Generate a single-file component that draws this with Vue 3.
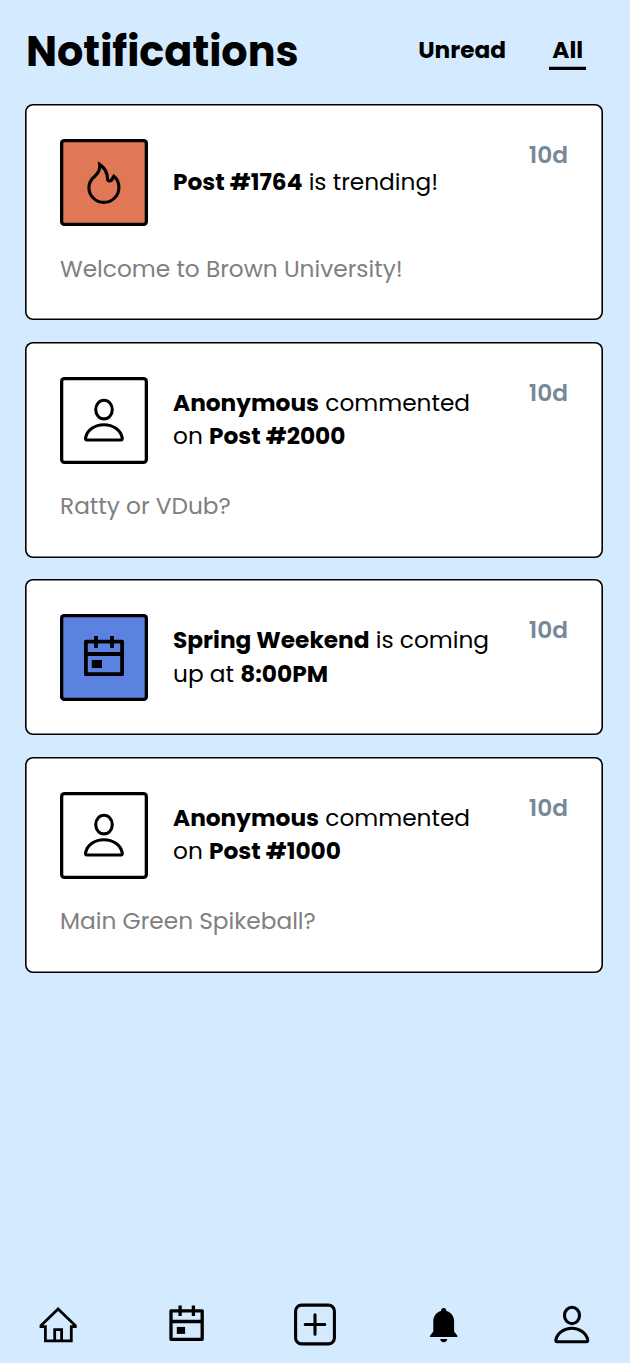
<script setup>
const items = [
  { id: 1, kind: 'flame', lines: [[{ t: 'Post #1764', b: true }, { t: ' is trending!' }]], body: 'Welcome to Brown University!' },
  { id: 2, kind: 'person', lines: [[{ t: 'Anonymous', b: true }, { t: ' commented' }], [{ t: 'on ' }, { t: 'Post #2000', b: true }]], body: 'Ratty or VDub?' },
  { id: 3, kind: 'calendar', lines: [[{ t: 'Spring Weekend', b: true }, { t: ' is coming' }], [{ t: 'up at ' }, { t: '8:00PM', b: true }]], body: '' },
  { id: 4, kind: 'person', lines: [[{ t: 'Anonymous', b: true }, { t: ' commented' }], [{ t: 'on ' }, { t: 'Post #1000', b: true }]], body: 'Main Green Spikeball?' },
]
</script>

<template>
  <div class="screen">
    <header class="header">
      <h1 class="title">Notifications</h1>
      <nav class="tabs">
        <span class="tab">Unread</span>
        <span class="tab active">All</span>
      </nav>
    </header>

    <main class="list">
      <article v-for="item in items" :key="item.id" class="card">
        <div class="row">
          <div class="tile" :class="item.kind">
            <svg v-if="item.kind === 'flame'" viewBox="0 0 44 44">
              <path d="M17.6 3.4C22 6.3 25.3 11.4 25.5 17.6C25.7 20.7 29.4 20.6 30.6 17.4C31 16.4 31.4 15.8 31.8 15.2C35 17.8 36.9 21.9 36.9 26.4A15 15 0 0 1 6.9 26.4C6.9 21.2 9.4 18 13.3 14.7C16.9 11.6 18.2 8.4 17.6 3.4Z" />
            </svg>
            <svg v-else-if="item.kind === 'person'" viewBox="0 0 44 44">
              <ellipse cx="22" cy="11.6" rx="8.3" ry="9.3" />
              <path d="M5 42H38.8Q40.7 42 40.2 39.6C38.6 31.8 31 26.7 21.9 26.7S5.2 31.8 3.6 39.6Q3.1 42 5 42Z" />
            </svg>
            <svg v-else class="cal" viewBox="0 0 44 44">
              <path d="M3.9 5.6H40.1V38.2H3.9ZM4 18H40M14 0V12M30 0V12" />
              <path class="solid" d="M9.8 24H20V32H9.8Z" />
            </svg>
          </div>
          <p class="message">
            <span v-for="(line, i) in item.lines" :key="i" class="line"><span v-for="(part, j) in line" :key="j" :class="{ strong: part.b }">{{ part.t }}</span></span>
          </p>
          <span class="age">10d</span>
        </div>
        <p v-if="item.body" class="body">{{ item.body }}</p>
      </article>
    </main>

    <footer class="bar">
      <svg viewBox="0 0 44 44">
        <path class="home" d="M22.1 7L39.3 23.6V24.7H35.3V38.9H9.4V24.7H5V23.6ZM18.7 38.8V27.7H25.6V38.8" />
      </svg>
      <svg viewBox="0 0 44 44">
        <path class="thick" d="M6 8.8H37.2V37.3H6ZM6.3 19.5H36.9M15.1 3.5V13.9M28.4 3.5V13.9" />
        <path class="solid" d="M11.8 24.9H20.1V31.9H11.8Z" />
      </svg>
      <svg viewBox="0 0 44 44">
        <rect x="2.6" y="3.1" width="38.8" height="38.8" rx="6" />
        <path d="M22 12.7V32.3M12.2 22.5H31.8" />
      </svg>
      <svg viewBox="0 0 44 44">
        <path class="solid" d="M21.7 6C23.2 6 24.4 7.2 24.4 8.9C29.2 10.1 32.1 14.2 32.1 19.2V29.4L35.4 33.7V35H8V33.7L11.3 29.4V19.2C11.3 14.2 14.2 10.1 19 8.9C19 7.2 20.2 6 21.7 6ZM18.1 37H25.3C24.8 39.1 23.5 40.3 21.7 40.3S18.6 39.1 18.1 37Z" />
      </svg>
      <svg viewBox="0 0 44 44">
        <ellipse cx="22" cy="13.4" rx="7.5" ry="8.2" />
        <path d="M7.3 39.8H36.3Q38.1 39.8 37.7 37.8C36.3 31 29.6 26.2 21.8 26.2S7.3 31 5.9 37.8Q5.5 39.8 7.3 39.8Z" />
      </svg>
    </footer>
  </div>
</template>

<style>
body { background: #d4eaff; }
</style>

<style scoped>
.screen {
  box-sizing: border-box;
  width: 630px;
  height: 1363px;
  display: flex;
  flex-direction: column;
  background: #d4eaff;
  color: #000;
  font-family: Poppins, Inter, sans-serif;
  font-size: 23.26px;
}
.header {
  height: 104px;
  flex: none;
  box-sizing: border-box;
  padding: 20px 43.6px 0 26px;
  display: flex;
  justify-content: space-between;
  align-items: flex-start;
}
.title {
  margin: 0;
  font-size: 41.3px;
  line-height: 64px;
  font-weight: 700;
  white-space: nowrap;
}
.tabs { display: flex; gap: 39.9px; padding-top: 12px; }
.tab {
  box-sizing: border-box;
  height: 37.5px;
  padding: 0 3.2px;
  line-height: 36px;
  font-weight: 700;
  white-space: nowrap;
}
.active { box-shadow: inset 0 -3.2px 0 #000; }
.list { display: flex; flex-direction: column; gap: 21.5px; padding: 0.3px 27px 0 25px; }
.card {
  box-sizing: border-box;
  padding: 35.2px 35px 33.8px;
  border-radius: 8px;
  background: #fff;
  box-shadow: inset 0 0 0 1.6px #000;
}
.row { display: flex; align-items: center; height: 87px; }
.tile {
  box-sizing: border-box;
  flex: none;
  width: 88px;
  height: 87px;
  border-radius: 4.5px;
  box-shadow: inset 0 0 0 3.3px #000;
  display: flex;
  align-items: center;
  justify-content: center;
}
.flame { background: #e07856; }
.calendar { background: #5b82e0; }
svg { width: 44px; height: 44px; fill: none; stroke: #000; stroke-width: 3.1; stroke-linecap: round; flex: none; display: block; overflow: visible; }
.cal { stroke-width: 3.8; stroke-linecap: butt; stroke-linejoin: round; }
.solid { fill: #000; stroke: none; }
.home { stroke-width: 2.8; }
.thick { stroke-width: 3.3; stroke-linecap: butt; stroke-linejoin: round; }
.message { margin: 0 0 0 25px; flex: 1; line-height: 33.9px; white-space: pre; }
.line { display: block; }
.strong { font-weight: 700; }
.age { align-self: flex-start; line-height: 33px; font-weight: 600; color: #778899; }
.body { margin: 24.2px 0 -0.2px; line-height: 36px; color: #808080; white-space: nowrap; }
.bar { margin-top: auto; height: 61px; padding: 0 36px; display: flex; justify-content: space-between; }
</style>
